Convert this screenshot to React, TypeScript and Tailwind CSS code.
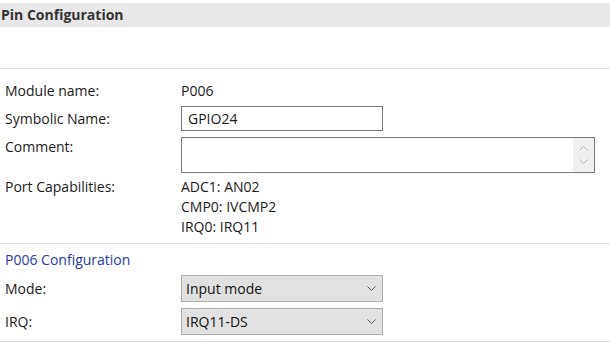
import React from "react";

const Chevron = ({ up = false, className = "" }: { up?: boolean; className?: string }) => (
  <svg width="9" height="5" viewBox="0 0 9 5" className={className}>
    <path
      d={up ? "M0.5 4.5 L4.5 0.5 L8.5 4.5" : "M0.5 0.5 L4.5 4.5 L8.5 0.5"}
      fill="none"
      stroke="currentColor"
      strokeWidth="1"
    />
  </svg>
);

const Select = ({ value }: { value: string }) => (
  <div className="flex h-[27px] w-[202px] items-center justify-between border border-[#adadad] bg-[#e1e1e1] pl-[4px] pr-[6px] text-[#111]">
    <span>{value}</span>
    <Chevron className="text-[#555]" />
  </div>
);

const App = () => {
  return (
    <div
      className="h-[345px] w-[610px] overflow-hidden bg-white text-[14px] leading-[20px] text-[#1a1a1a]"
      style={{ fontFamily: '"Open Sans", "Noto Sans", sans-serif' }}
    >
      <div className="mt-[3px] flex h-[24px] items-center bg-[#e8e8e8] pl-[1px] font-bold text-[#333]">
        Pin Configuration
      </div>

      <div className="mt-[41px] h-px bg-[#e2e2e2]" />

      <div className="grid grid-cols-[176px_1fr] pl-[5px] pt-[12px]">
        <div className="h-[20px]">Module name:</div>
        <div className="h-[20px]">P006</div>

        <div className="mt-[5px] flex h-[25px] items-center">Symbolic Name:</div>
        <div className="mt-[5px] flex h-[25px] w-[202px] items-center border border-[#7a7a7a] pl-[6px]">
          GPIO24
        </div>

        <div className="mt-[6px] h-[36px]">Comment:</div>
        <div className="mt-[6px] flex h-[36px] w-[414px] justify-end border border-[#7a7a7a]">
          <div className="flex w-[21px] flex-col items-center justify-between bg-[#f0f0f0] py-[8px] text-[#b5b5b5]">
            <Chevron up />
            <Chevron />
          </div>
        </div>

        <div className="mt-[4px]">Port Capabilities:</div>
        <div className="mt-[4px] flex flex-col">
          <span>ADC1: AN02</span>
          <span>CMP0: IVCMP2</span>
          <span>IRQ0: IRQ11</span>
        </div>
      </div>

      <div className="mt-[6px] h-px bg-[#e2e2e2]" />

      <div className="grid grid-cols-[176px_1fr] pl-[5px] pt-[6px]">
        <div className="col-span-2 text-[#2b3aa8]">P006 Configuration</div>

        <div className="mt-[5px] flex h-[27px] items-center">Mode:</div>
        <div className="mt-[5px]">
          <Select value="Input mode" />
        </div>

        <div className="mt-[6px] flex h-[27px] items-center">IRQ:</div>
        <div className="mt-[6px]">
          <Select value="IRQ11-DS" />
        </div>
      </div>

      <div className="mt-[6px] h-px bg-[#e2e2e2]" />
    </div>
  );
};

export default App;
